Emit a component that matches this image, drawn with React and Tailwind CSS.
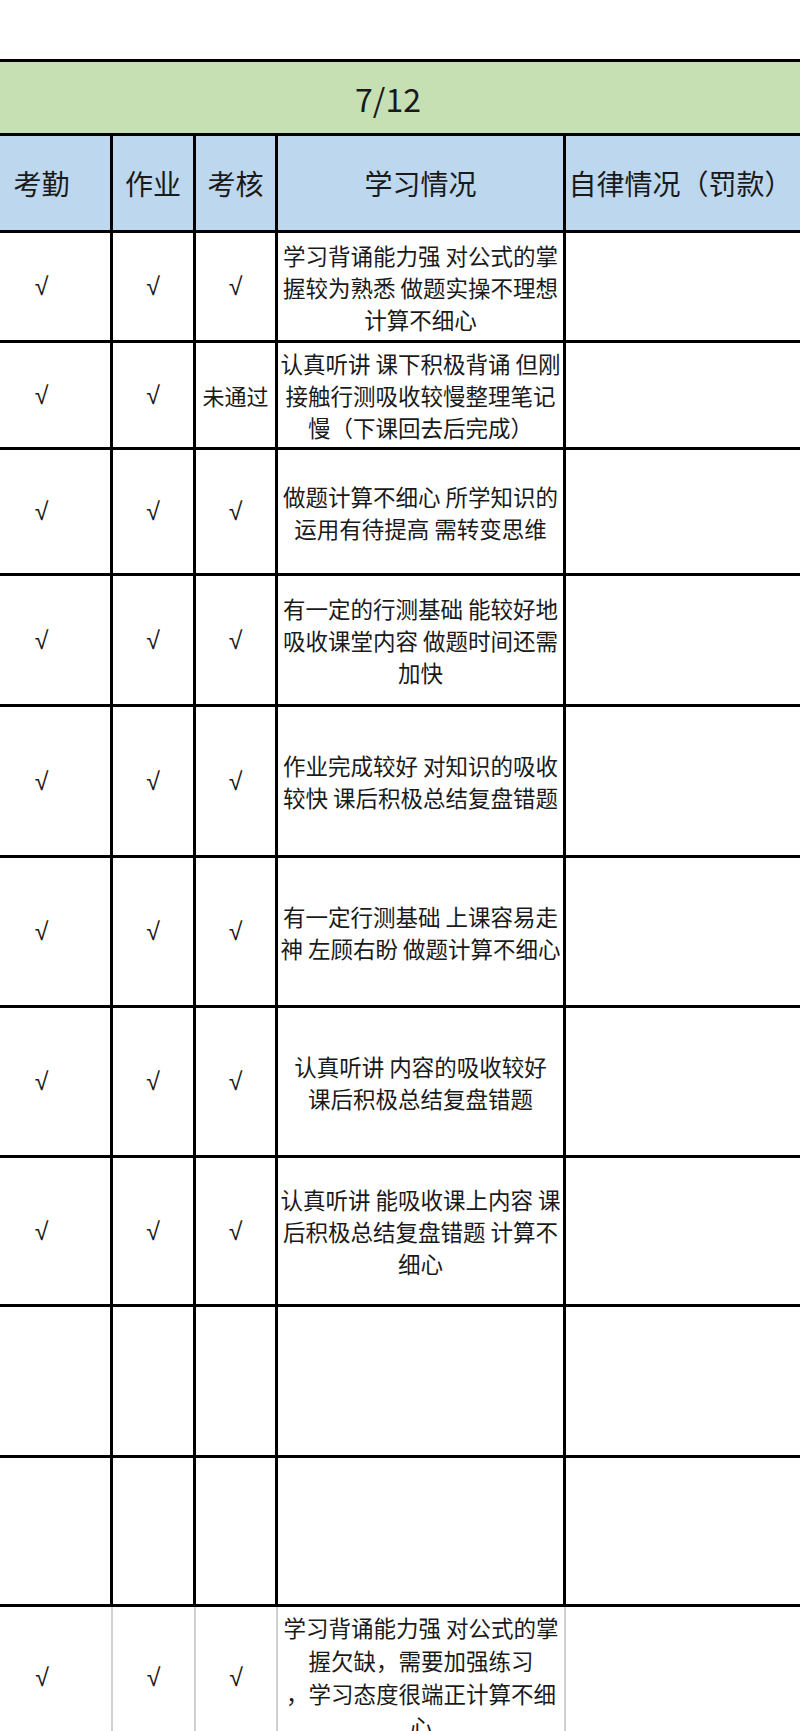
import React from "react";

const rows = [
  { h: "h-[110px]", a: "√", b: "√", c: "√", lines: ["学习背诵能力强 对公式的掌", "握较为熟悉 做题实操不理想", "计算不细心"] },
  { h: "h-[107px]", a: "√", b: "√", c: "未通过", lines: ["认真听讲 课下积极背诵 但刚", "接触行测吸收较慢整理笔记", "慢（下课回去后完成）"] },
  { h: "h-[126px]", a: "√", b: "√", c: "√", lines: ["做题计算不细心 所学知识的", "运用有待提高 需转变思维"] },
  { h: "h-[131px]", a: "√", b: "√", c: "√", lines: ["有一定的行测基础 能较好地", "吸收课堂内容 做题时间还需", "加快"] },
  { h: "h-[151px]", a: "√", b: "√", c: "√", lines: ["作业完成较好 对知识的吸收", "较快 课后积极总结复盘错题"] },
  { h: "h-[150px]", a: "√", b: "√", c: "√", lines: ["有一定行测基础 上课容易走", "神 左顾右盼 做题计算不细心"] },
  { h: "h-[150px]", a: "√", b: "√", c: "√", lines: ["认真听讲 内容的吸收较好", "课后积极总结复盘错题"] },
  { h: "h-[149px]", a: "√", b: "√", c: "√", lines: ["认真听讲 能吸收课上内容 课", "后积极总结复盘错题 计算不", "细心"] },
  { h: "h-[151px]", a: "", b: "", c: "", lines: [] },
  { h: "h-[149px]", a: "", b: "", c: "", lines: [] },
];

function Check({ v }) {
  if (v === "√") {
    return (
      <span className="font-['Liberation_Sans',sans-serif] text-[25px] leading-none text-[#1a1a1a]">√</span>
    );
  }
  return <span className="text-[22px] leading-none text-[#1a1a1a] whitespace-nowrap">{v}</span>;
}

function Lines({ lines, lh = "leading-[32px]" }) {
  return (
    <div className={`flex flex-col items-center text-[22.5px] text-[#1a1a1a] ${lh}`}>
      {lines.map((l, i) => (
        <div key={i} className="whitespace-nowrap">{l}</div>
      ))}
    </div>
  );
}

export default function App() {
  return (
    <div className="w-[800px] h-[1731px] overflow-hidden bg-white font-['Noto_Sans_CJK_SC','Noto_Sans',sans-serif]">
      <div className="h-[59px]" />
      <div className="ml-[-27px] w-[830px]">
        {/* Title */}
        <div className="h-[74px] border-t-[3px] border-black bg-[#c6e0b4] flex items-center justify-center">
          <span className="text-[32px] leading-none text-[#1a1a1a]">7/12</span>
        </div>
        {/* Header */}
        <div className="h-[97px] border-t-[3px] border-black bg-[#bdd7ee] flex text-[28px] text-[#1a1a1a]">
          <div className="w-[140px] border-r-[3px] border-black flex items-center justify-center">考勤</div>
          <div className="w-[83px] border-r-[3px] border-black flex items-center justify-center">作业</div>
          <div className="w-[82px] border-r-[3px] border-black flex items-center justify-center">考核</div>
          <div className="w-[288px] border-r-[3px] border-black flex items-center justify-center">学习情况</div>
          <div className="flex-1 flex items-center justify-center whitespace-nowrap pr-[8px]">自律情况（罚款）</div>
        </div>
        {rows.map((r, i) => (
          <div key={i} className={`${r.h} border-t-[3px] border-black flex`}>
            <div className="w-[140px] border-r-[3px] border-black flex items-center justify-center">
              <Check v={r.a} />
            </div>
            <div className="w-[83px] border-r-[3px] border-black flex items-center justify-center">
              <Check v={r.b} />
            </div>
            <div className="w-[82px] border-r-[3px] border-black flex items-center justify-center">
              <Check v={r.c} />
            </div>
            <div className="w-[288px] border-r-[3px] border-black flex items-center justify-center overflow-hidden">
              <Lines lines={r.lines} lh="leading-[32px]" />
            </div>
            <div className="flex-1" />
          </div>
        ))}
        {/* Last row */}
        <div className="h-[143px] border-t-[3px] border-black flex">
          <div className="w-[140px] border-r-2 border-[#d0d0d0] flex items-center justify-center">
            <Check v="√" />
          </div>
          <div className="w-[83px] border-r-2 border-[#d0d0d0] flex items-center justify-center">
            <Check v="√" />
          </div>
          <div className="w-[82px] border-r-2 border-[#d0d0d0] flex items-center justify-center">
            <Check v="√" />
          </div>
          <div className="w-[288px] border-r-2 border-[#d0d0d0] flex items-center justify-center overflow-hidden">
            <Lines
              lh="leading-[33px]"
              lines={["学习背诵能力强 对公式的掌", "握欠缺，需要加强练习", "，学习态度很端正计算不细", "心"]}
            />
          </div>
          <div className="flex-1" />
        </div>
      </div>
    </div>
  );
}
